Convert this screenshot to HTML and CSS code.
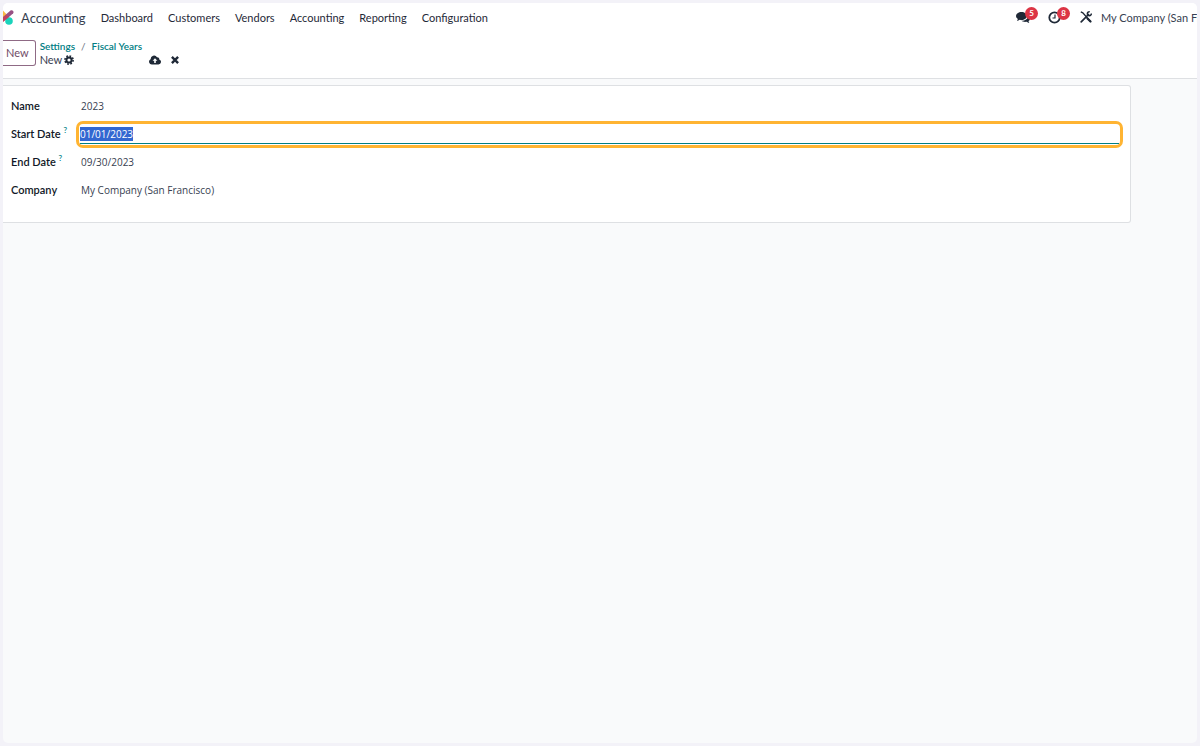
FILE: index.html
```
<!DOCTYPE html>
<html lang="en">
<head>
  <meta charset="utf-8">
  <title>Fiscal Years</title>
  <link rel="stylesheet" href="styles.css">
</head>
<body>
  <div class="app">
    <header class="navbar">
      <a class="brand" href="#">
        <svg class="logo" width="11" height="16" viewBox="0 0 11 16">
          <path d="M0 .5l5.500 6-5.500 5z" fill="#fbb945"/>
          <circle cx="6" cy="11" r="3.800" fill="#1ad3bb"/>
          <path d="M0 11.500V7L7.500.6c2-1 3.800 1 2.700 2.600L6 7z" fill="#985184"/>
          <path d="M0 12V7.500l3-2.500 3.200 1.800z" fill="#c2405e"/>
        </svg>
        <span>Accounting</span>
      </a>
      <nav class="menu">
        <a href="#">Dashboard</a>
        <a href="#">Customers</a>
        <a href="#">Vendors</a>
        <a href="#">Accounting</a>
        <a href="#">Reporting</a>
        <a href="#">Configuration</a>
      </nav>
      <div class="systray">
        <button class="tray" aria-label="Messages">
          <svg width="14" height="14" viewBox="0 0 14 14" fill="#1f2937">
            <path d="M5.500 2C8.500 2 11 3.700 11 6s-2.500 4-5.500 4c-.6 0-1.200-.1-1.700-.2C2.900 10.500 1.900 11 .8 11c.6-.6.9-1.200 1-2C.7 8.200 0 7.200 0 6c0-2.300 2.500-4 5.500-4z"/>
            <path d="M12 6c1.200.6 2 1.600 2 2.700 0 1-.6 1.800-1.500 2.400.1.700.4 1.300.9 1.900-1.100-.1-2-.5-2.800-1.200-1.900.4-4 0-5.300-1C9 10.900 12 9 12 6z"/>
          </svg>
          <span class="badge">5</span>
        </button>
        <button class="tray" aria-label="Activities">
          <svg width="14" height="14" viewBox="0 0 14 14" fill="none" stroke="#1f2937">
            <circle cx="6.500" cy="7.500" r="5.200" stroke-width="1.800"/>
            <path d="M7 4.500v3.500H4.500" stroke-width="1.200"/>
          </svg>
          <span class="badge">8</span>
        </button>
        <button class="tools" aria-label="Developer tools">
          <svg width="12" height="14" viewBox="0 0 12 14" fill="none" stroke="#1f2937">
            <path d="M.8.800l2 1L10.500 10.500" stroke-width="1.300"/>
            <path d="M7.500 7.500l3 3" stroke-width="2.200" stroke-linecap="round"/>
            <path d="M1.200 10.800L8.500 3.500" stroke-width="1.700" stroke-linecap="round"/>
            <path d="M9.700.8A2 2 0 1 0 11.300 2.500" stroke-width="1.400"/>
          </svg>
        </button>
        <button class="company">My Company (San Francisco)</button>
      </div>
    </header>

    <div class="control-panel">
      <button class="btn-new">New</button>
      <div class="crumbs">
        <div class="trail">
          <a href="#">Settings</a>
          <span class="slash">/</span>
          <a href="#">Fiscal Years</a>
        </div>
        <div class="current">
          <span>New</span>
          <button class="icon-btn" aria-label="Actions">
            <svg width="10" height="10" viewBox="0 0 10 10" fill="none" stroke="#1f2937">
              <circle cx="5" cy="5" r="2.600" stroke-width="2"/>
              <circle cx="5" cy="5" r="4.100" stroke-width="1.600" stroke-dasharray="1.700 1.520"/>
            </svg>
          </button>
          <div class="status">
            <button class="icon-btn" aria-label="Save">
              <svg width="12" height="10" viewBox="0 0 12 10">
                <path d="M3 9.500A2.800 2.800 0 0 1 1.600 4.200 3.500 3.500 0 0 1 8 2.200a2 2 0 0 1 2.200 2.400 2.500 2.500 0 0 1-.7 4.900z" fill="#1f2937"/>
                <path d="M6 3.300L3.600 5.800h1.600v2.200h1.600V5.800h1.600z" fill="#fff"/>
              </svg>
            </button>
            <button class="icon-btn" aria-label="Discard">
              <svg width="8" height="8" viewBox="0 0 8 8" stroke="#1f2937" stroke-width="2.400">
                <path d="M.9.900l6.200 6.200M7.100.9L.9 7.100"/>
              </svg>
            </button>
          </div>
        </div>
      </div>
    </div>

    <main class="content">
      <form class="sheet">
        <div class="row">
          <label for="name">Name</label>
          <div class="field"><input id="name" type="text" value="2023"></div>
        </div>
        <div class="row">
          <label for="start">Start Date <sup>?</sup></label>
          <div class="field active"><input id="start" type="text" value="01/01/2023" autocomplete="off"></div>
        </div>
        <div class="row">
          <label for="end">End Date <sup>?</sup></label>
          <div class="field"><input id="end" type="text" value="09/30/2023"></div>
        </div>
        <div class="row">
          <label for="company">Company</label>
          <div class="field"><input id="company" type="text" value="My Company (San Francisco)"></div>
        </div>
      </form>
    </main>
  </div>

  <script>
    var start = document.getElementById('start')
    start.focus()
    start.select()
  </script>
</body>
</html>
```

FILE: styles.css
```
* {
  box-sizing: border-box;
}
body {
  margin: 0;
  padding: 3px;
  height: 100vh;
  background: #f3f2f8;
  font-family: Lato, "Open Sans", sans-serif;
  font-size: 11px;
  line-height: 14px;
  color: #374151;
}
a {
  color: inherit;
  text-decoration: none;
}
button,
input {
  font: inherit;
  color: inherit;
  background: none;
  border: 0;
  padding: 0;
}
svg {
  display: block;
}
.app {
  height: 100%;
  display: flex;
  flex-direction: column;
  background: #f9fafb;
  border-radius: 5px;
  overflow: hidden;
}

/* top bar */
.navbar {
  display: flex;
  align-items: center;
  height: 30px;
  background: #fff;
  white-space: nowrap;
}
.brand {
  display: flex;
  align-items: center;
  gap: 7px;
  font-size: 13px;
}
.menu {
  display: flex;
  gap: 15px;
  margin-left: 15px;
  color: #1f2937;
}
.systray {
  display: flex;
  align-items: center;
  width: 184px;
  margin-left: auto;
  overflow: hidden;
}
.tray {
  position: relative;
  flex: none;
  width: 32px;
  padding: 3px 3px 5px;
}
.badge {
  position: absolute;
  top: 0;
  left: 12px;
  width: 13px;
  height: 13px;
  border-radius: 7px;
  background: #dc3545;
  color: #fff;
  font-size: 8px;
  font-weight: 700;
  line-height: 13px;
  text-align: center;
}
.tools {
  margin-left: 3px;
}
.company {
  margin-left: 9px;
}

/* breadcrumbs */
.control-panel {
  display: flex;
  align-items: center;
  gap: 4px;
  height: 46px;
  padding-bottom: 5px;
  background: #fff;
  border-bottom: 1px solid #dee0e3;
}
.btn-new {
  height: 26px;
  padding: 0 6px 0 3px;
  border: 1px solid #8f6a85;
  border-left: 0;
  border-radius: 0 3px 3px 0;
  color: #714b67;
}
.crumbs {
  line-height: 13px;
}
.trail {
  display: flex;
  gap: 6px;
  color: #017e84;
  font-weight: 600;
  font-size: 10px;
}
.slash {
  color: #6b7280;
  font-weight: 400;
}
.current {
  display: flex;
  align-items: center;
  gap: 2px;
}
.status {
  display: flex;
  align-items: center;
  gap: 10px;
  margin-left: 73px;
}

/* form */
.content {
  padding: 6px 66px 0 0;
}
.sheet {
  padding: 6px 7px 18px 8px;
  background: #fff;
  border: 1px solid #dee0e3;
  border-left: 0;
  border-radius: 0 3px 3px 0;
}
.row {
  display: grid;
  grid-template-columns: 66px 1fr;
  align-items: center;
  height: 28px;
}
label {
  color: #111827;
  font-weight: 600;
  white-space: nowrap;
}
sup {
  color: #017e84;
  font-size: 8px;
  line-height: 0;
}
.field {
  padding: 2px 3px;
  border: 1px solid transparent;
}
.field input {
  display: block;
  width: 100%;
  height: 19px;
  font-family: "Open Sans", "Noto Sans", sans-serif;
  font-size: 10px;
  outline: 0;
}
.field.active {
  margin-left: -1px;
  padding: 1px;
  border: 3px solid #ffb432;
  border-radius: 7px;
}
.field.active input {
  border-bottom: 1px solid #017e84;
}
.field input::selection {
  background: #3367d1;
  color: #fff;
}
```
